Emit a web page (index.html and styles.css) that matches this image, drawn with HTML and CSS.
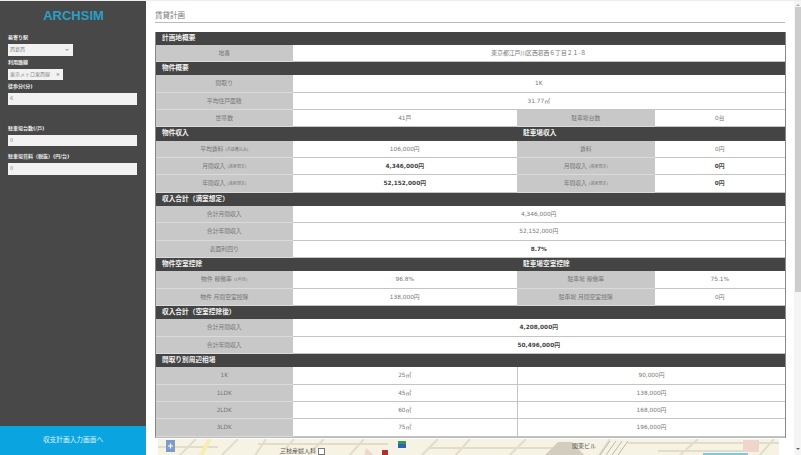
FILE: index.html
```html
<!DOCTYPE html>
<html lang="ja">
<head>
  <meta charset="UTF-8" />
  <meta name="viewport" content="width=device-width, initial-scale=1.0"/>
  <title>賃貸計画</title>
  <link rel="stylesheet" href="styles.css">
</head>
<body>

  <div class="page">
    <aside class="sidebar">
      <div class="logo">ARCHSIM</div>
      <form class="search">
        <label>最寄り駅</label>
        <div class="select">西葛西<span class="caret"></span></div>
        <label>利用路線</label>
        <div class="tag">東京メトロ東西線<span class="tag-x">×</span></div>
        <label>徒歩分(分)</label>
        <div class="input">6</div>
        <label class="gap">駐車場台数(/戸)</label>
        <div class="input">0</div>
        <label class="gap-small">駐車場賃料（税抜）(円/台)</label>
        <div class="input">0</div>
      </form>
      <a class="next" href="#">収支計画入力画面へ</a>
    </aside>

    <main class="main-content">
      <h2>賃貸計画</h2>

      <div class="sheet">
        <div class="head all">計画地概要</div>
        <div class="label">地番</div>
        <div class="val wide">東京都江戸川区西葛西６丁目２１-８</div>

        <div class="head all">物件概要</div>
        <div class="label">間取り</div>
        <div class="val wide">1K</div>
        <div class="label">平均住戸面積</div>
        <div class="val wide">31.77㎡</div>
        <div class="label">世帯数</div>
        <div class="val">41戸</div>
        <div class="label">駐車場台数</div>
        <div class="val">0台</div>

        <div class="head half">物件収入</div>
        <div class="head half">駐車場収入</div>
        <div class="label">平均賃料 <small>(共益費込み)</small></div>
        <div class="val">106,000円</div>
        <div class="label">賃料</div>
        <div class="val">0円</div>
        <div class="label">月間収入 <small>(満室想定)</small></div>
        <div class="val strong">4,346,000円</div>
        <div class="label">月間収入 <small>(満室想定)</small></div>
        <div class="val strong">0円</div>
        <div class="label">年間収入 <small>(満室想定)</small></div>
        <div class="val strong">52,152,000円</div>
        <div class="label">年間収入 <small>(満室想定)</small></div>
        <div class="val strong">0円</div>

        <div class="head all">収入合計（満室想定）</div>
        <div class="label">合計月間収入</div>
        <div class="val wide">4,346,000円</div>
        <div class="label">合計年間収入</div>
        <div class="val wide">52,152,000円</div>
        <div class="label">表面利回り</div>
        <div class="val wide strong">8.7%</div>

        <div class="head half">物件空室控除</div>
        <div class="head half">駐車場空室控除</div>
        <div class="label">物件 稼働率 <small>(1年目)</small></div>
        <div class="val">96.8%</div>
        <div class="label">駐車場 稼働率</div>
        <div class="val">75.1%</div>
        <div class="label">物件 月間空室控除</div>
        <div class="val">138,000円</div>
        <div class="label">駐車場 月間空室控除</div>
        <div class="val">0円</div>

        <div class="head all">収入合計（空室控除後）</div>
        <div class="label">合計月間収入</div>
        <div class="val wide strong">4,208,000円</div>
        <div class="label">合計年間収入</div>
        <div class="val wide strong">50,496,000円</div>

        <div class="head all">間取り別周辺相場</div>
        <div class="label">1K</div>
        <div class="val">25㎡</div>
        <div class="val rest">90,000円</div>
        <div class="label">1LDK</div>
        <div class="val">45㎡</div>
        <div class="val rest">138,000円</div>
        <div class="label">2LDK</div>
        <div class="val">60㎡</div>
        <div class="val rest">168,000円</div>
        <div class="label">3LDK</div>
        <div class="val">75㎡</div>
        <div class="val rest">196,000円</div>
      </div>

      <svg class="map" viewBox="0 0 621 40" width="621" height="40">
        <rect width="621" height="40" fill="#f6f2e4"/>
        <g fill="none" stroke="#e2dccb" stroke-width="2">
          <path d="M20 18 L38 0 M62 18 L80 0 M96 18 L108 0 M120 18 L136 0 M150 16 L166 0 M190 18 L206 0 M262 18 L280 0 M296 18 L312 0 M350 18 L368 0 M440 18 L452 0 M520 18 L540 0 M600 18 L616 0"/>
          <path d="M0 8 H60 M100 5 H230 M270 9 H400 M470 4 H621 M500 12 H590"/>
        </g>
        <path d="M42 18 L52 0" stroke="#f6eeb0" stroke-width="4" fill="none"/>
        <path d="M385 18 L400 3 L414 3 L428 18Z" fill="#d2cdbf"/>
        <path d="M442 16 L452 2 M448 16 L458 2 M454 16 L464 2 M460 16 L470 2" stroke="#bdb8aa" stroke-width="1" fill="none"/>
        <path d="M585 1 h16 v12 h-16z M208 9 l10 9 h-12z" fill="#eed6ca"/>
        <rect x="8" y="1" width="9" height="12" fill="#7d9ccb"/>
        <path d="M10 7 H15 M12.500 4.500 V9.500" stroke="#fff" stroke-width="1.200"/>
        <text x="122" y="14" class="map-text">三枝産婦人科</text>
        <rect x="160.500" y="9.500" width="6" height="6" fill="#fff" stroke="#777" stroke-width="1"/>
        <rect x="224" y="11" width="6" height="7" fill="#b5302c"/>
        <rect x="240" y="2" width="8" height="3" fill="#2f9a55"/>
        <rect x="240" y="5" width="8" height="4" fill="#2f62b5"/>
        <text x="414" y="9" class="map-text">関東ビル</text>
        <rect x="545" y="14" width="45" height="6" fill="#7ccbdb"/>
      </svg>
    </main>

    <div class="scrollbar">
      <span class="arrow up"></span>
      <span class="thumb"></span>
      <span class="arrow down"></span>
    </div>
  </div>

</body>
</html>
```

FILE: styles.css
```css
html, body {
  height: 100%;
}

body {
  font-family: "DejaVu Sans", "Noto Sans CJK JP", sans-serif;
  margin: 0;
  background-color: #fff;
  color: #777;
  font-size: 5.800px;
  overflow: hidden;
}

.page {
  display: flex;
  height: 454px;
  margin-top: 1px;
  overflow: hidden;
  box-shadow: 0 -1px 0 #eee;
}

/* Sidebar */
.sidebar {
  width: 146px;
  flex: none;
  background-color: #484848;
  display: flex;
  flex-direction: column;
}

.logo {
  text-align: center;
  font-family: "Liberation Sans", sans-serif;
  font-weight: bold;
  font-size: 13px;
  line-height: 15px;
  color: #2a9fc6;
  padding: 7px 0 0 1px;
}

.search {
  flex: 1;
  padding: 8px 9px 0 8px;
  display: flex;
  flex-direction: column;
  align-items: flex-start;
}

.search label {
  color: #eee;
  font-size: 5px;
  font-weight: bold;
  line-height: 8px;
  margin: 2px 0 3px;
}

.search label.gap {
  margin-top: 18.500px;
}

.search label.gap-small {
  margin-top: 6px;
}

.select, .tag, .input {
  color: #888;
  font-size: 5px;
  line-height: 11.700px;
  background-color: #f2f2f2;
  padding-left: 2px;
  box-sizing: border-box;
}

.select {
  width: 65px;
  display: flex;
  justify-content: space-between;
  align-items: center;
}

.caret {
  width: 0;
  height: 0;
  border-left: 2px solid transparent;
  border-right: 2px solid transparent;
  border-top: 2px solid #aaa;
  margin-right: 4px;
}

.tag {
  width: 55px;
  display: flex;
  justify-content: space-between;
  padding-right: 3px;
}

.tag-x {
  color: #555;
}

.input {
  width: 100%;
}

.next {
  display: block;
  height: 29px;
  line-height: 29px;
  background-color: #0aa5e0;
  color: #dff3fb;
  font-size: 6.700px;
  text-align: center;
  text-decoration: none;
}

/* Conteudo */
.main-content {
  flex: 1;
  min-width: 0;
  padding: 0 9px;
}

.main-content h2 {
  margin: 0;
  padding: 9px 0 0 0;
  height: 21.500px;
  box-sizing: border-box;
  font-size: 7.500px;
  line-height: 11px;
  font-weight: normal;
  color: #777;
  border-bottom: 1px solid #bbb;
}

.sheet {
  margin-top: 9px;
  display: grid;
  grid-template-columns: 136.500px 224.500px 137.500px 130.500px;
  border-right: 1px solid #888;
  border-left: 1px solid #888;
  border-bottom: 1px solid #bbb;
  box-sizing: border-box;
  width: 630.500px;
}

.head {
  height: 13.200px;
  line-height: 13px;
  font-size: 6.700px;
  background-color: #444;
  color: #f2f2f2;
  font-weight: bold;
  padding-left: 6px;
  box-sizing: border-box;
}

.head.all {
  grid-column: 1 / -1;
}

.head.half {
  grid-column: span 2;
}

.label, .val {
  height: 17.400px;
  line-height: 17px;
  text-align: center;
  box-sizing: border-box;
  border-bottom: 1px solid #c4c4c4;
}

.label {
  background-color: #c8c8c8;
  border-bottom-color: #dadada;
}

.val.wide {
  grid-column: span 3;
}

.val.rest {
  grid-column: span 2;
  border-left: 1px solid #c4c4c4;
}

.strong {
  font-weight: bold;
  color: #444;
}

small {
  font-size: 4px;
}

.map {
  display: block;
  margin: 1px 0 0 3px;
}

.map-text {
  font-size: 6px;
  fill: #555;
}

/* Barra de rolagem */
.scrollbar {
  width: 7px;
  flex: none;
  background-color: #f5f5f5;
  display: flex;
  flex-direction: column;
  align-items: center;
}

.thumb {
  width: 6px;
  height: 285px;
  background-color: #cdcdcd;
}

.arrow {
  width: 0;
  height: 0;
  border-left: 2px solid transparent;
  border-right: 2px solid transparent;
}

.arrow.up {
  border-bottom: 2px solid #aaa;
  margin: 3px 0 1px;
}

.arrow.down {
  border-top: 2px solid #666;
  margin-top: 156px;
}
```
